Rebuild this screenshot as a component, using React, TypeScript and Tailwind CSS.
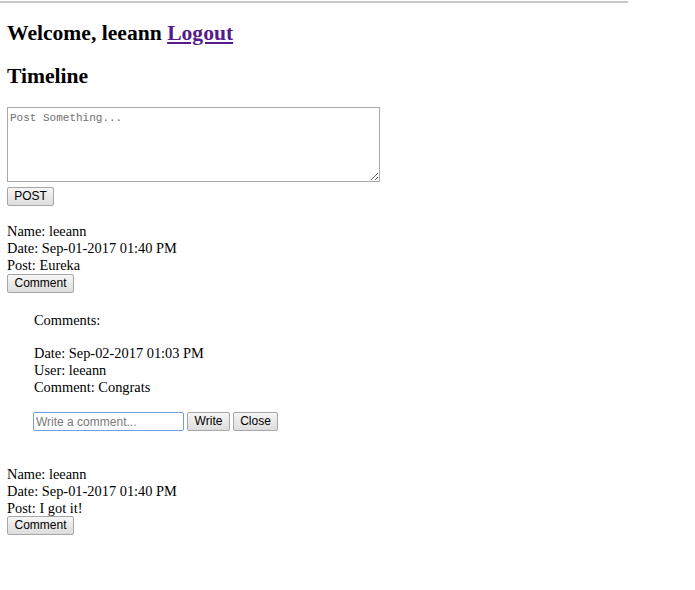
import React from "react";

function Btn({ children, w }: { children: React.ReactNode; w: string }) {
  return (
    <button
      className={`block h-[19px] ${w} shrink-0 rounded-[2px] border border-[#a6a6a6] bg-gradient-to-b from-[#f6f6f6] to-[#dddddd] p-0 text-center font-['Liberation_Sans',Arial,sans-serif] text-[12px] leading-[17px] text-black`}
    >
      {children}
    </button>
  );
}

function Line({ children }: { children: React.ReactNode }) {
  return <div className="h-[17px] whitespace-nowrap pt-px leading-[17px]">{children}</div>;
}

export default function App() {
  return (
    <div className="min-h-[590px] w-[695px] bg-white font-['Liberation_Serif','Times_New_Roman',serif] text-[14.4px] text-black">
      <div className="mt-px h-[2px] w-[628px] bg-[#c8c8c8]" />
      <div className="px-[7px]">
        <h2 className="mt-[18px] h-[25px] whitespace-nowrap text-[21.6px] font-bold leading-[25px]">
          Welcome, leeann{" "}
          <a href="#" className="text-[#551a8b] underline">
            Logout
          </a>
        </h2>
        <h2 className="mt-[17.5px] h-[25px] text-[21.6px] font-bold leading-[25px]">Timeline</h2>
        <textarea
          className="mt-[18.5px] block h-[75px] w-[373px] resize border border-[#a9a9a9] bg-white px-[2px] py-[3px] font-['Liberation_Mono','DejaVu_Sans_Mono',monospace] text-[11px] leading-[14px] placeholder:text-[#707070]"
          placeholder="Post Something..."
        />
        <div className="mt-[5px] flex">
          <Btn w="w-[47px]">POST</Btn>
        </div>

        <div className="mt-[16px]">
          <Line>Name: leeann</Line>
          <Line>Date: Sep-01-2017 01:40 PM</Line>
          <Line>Post: Eureka</Line>
          <div className="mt-[1px] flex">
            <Btn w="w-[67px]">Comment</Btn>
          </div>
        </div>

        <div className="pl-[27px]">
          <div className="mt-[17.5px]">
            <Line>Comments:</Line>
          </div>
          <div className="mt-[16px]">
            <Line>Date: Sep-02-2017 01:03 PM</Line>
            <Line>User: leeann</Line>
            <Line>Comment: Congrats</Line>
          </div>
          <div className="-ml-px mt-[17.5px] flex items-center gap-[3px]">
            <input
              className="h-[19px] w-[151px] rounded-[2px] border border-[#6f9fe0] bg-white px-[2px] font-['Liberation_Sans',Arial,sans-serif] text-[12px] leading-[17px] outline-none placeholder:text-[#7a7a7a]"
              placeholder="Write a comment..."
            />
            <Btn w="w-[43px]">Write</Btn>
            <Btn w="w-[45px]">Close</Btn>
          </div>
        </div>

        <div className="mt-[33.5px]">
          <Line>Name: leeann</Line>
          <Line>Date: Sep-01-2017 01:40 PM</Line>
          <Line>Post: I got it!</Line>
          <div className="mt-[0.5px] flex">
            <Btn w="w-[67px]">Comment</Btn>
          </div>
        </div>
      </div>
    </div>
  );
}
